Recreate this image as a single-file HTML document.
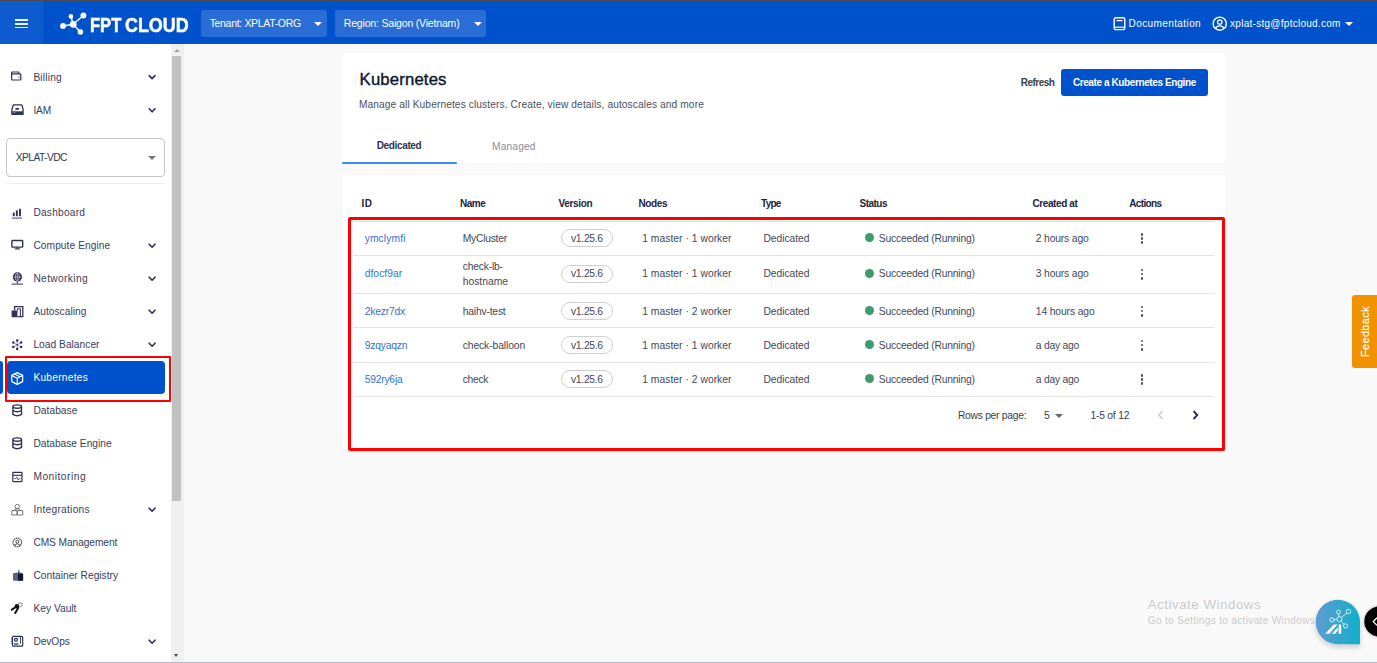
<!DOCTYPE html>
<html><head><meta charset="utf-8">
<style>
*{box-sizing:border-box;margin:0;padding:0}
html,body{width:1377px;height:663px;overflow:hidden;background:#f9f9f9;font-family:"Liberation Sans",sans-serif;position:relative}
.abs{position:absolute}
.tx{position:absolute;white-space:nowrap}
#topline{left:0;top:0;width:1377px;height:1px;background:#4a4d52}
#hdr{left:0;top:1px;width:1377px;height:43px;background:#0052cc}
#hamb{left:0;top:1px;width:43px;height:43px;background:#0e5bd0}
.dd{position:absolute;background:#2b6dd6;border-radius:3px}
.caret{position:absolute;width:0;height:0;border-left:4px solid transparent;border-right:4px solid transparent;border-top:4.2px solid #fff}
#side{left:0;top:44px;width:171px;height:618px;background:#fff}
#sb{left:171px;top:44px;width:13px;height:618px;background:#f0f0f0}
#thumb{left:172px;top:56px;width:9px;height:445px;background:#c1c1c1}
#bottomline{left:0;top:662px;width:1377px;height:1px;background:#b6bac2}
.ic{position:absolute}
.chev{position:absolute;left:148px;width:8px;height:6px}
.card{position:absolute;background:#fff;border-radius:4px}
.rl{position:absolute;left:353px;width:861px;height:1px;background:#e3e3e3}
.chip{position:absolute;left:561px;width:52px;height:18px;border:1px solid #d0d0d0;border-radius:9px}
.dot{position:absolute;left:864.6px;width:9.5px;height:9.3px;border-radius:50%;background:#3d9c6c}
.keb{position:absolute;left:1140.6px;width:3px}
.keb i{display:block;width:2.8px;height:2.8px;border-radius:50%;background:#505050;margin-bottom:1.4px}

</style></head><body>
<div class="abs" id="topline"></div>
<div class="abs" id="hdr"></div>
<div class="abs" id="hamb"></div>
<div class="abs" style="left:171px;top:44px;width:1206px;height:1px;background:#fdfdfd"></div>
<div class="abs" style="left:15px;top:19px;width:13px;height:2px;background:#eef2fb"></div>
<div class="abs" style="left:15px;top:23px;width:13px;height:1.5px;background:#eef2fb"></div>
<div class="abs" style="left:15px;top:26.5px;width:13px;height:1.6px;background:#eef2fb"></div>
<svg class="abs" style="left:56px;top:8px" width="36" height="30" viewBox="0 0 36 30">
 <g stroke="#fff" stroke-width="1.5" fill="none"><line x1="7" y1="17.9" x2="17.2" y2="16.3"/><line x1="17.2" y1="16.3" x2="14.9" y2="8.4"/><line x1="17.2" y1="16.3" x2="27.4" y2="7.5"/><line x1="17.2" y1="16.3" x2="24.4" y2="24"/></g>
 <g fill="#fff"><circle cx="7" cy="17.9" r="2.9"/><circle cx="17.2" cy="16.3" r="3.4"/><circle cx="14.9" cy="8.4" r="2.3"/><circle cx="27.4" cy="7.5" r="2.9"/><circle cx="24.4" cy="24" r="2.8"/></g>
</svg>
<div class="dd" style="left:201px;top:10px;width:125.5px;height:26.7px"></div>
<div class="caret" style="left:314.2px;top:21.8px"></div>
<div class="dd" style="left:335.2px;top:10px;width:150.4px;height:26.7px"></div>
<div class="caret" style="left:473.5px;top:21.8px"></div>
<svg class="abs" style="left:1110px;top:14px" width="20" height="20" viewBox="0 0 20 20">
 <rect x="4.2" y="3.8" width="10.6" height="11.8" rx="1.5" fill="none" stroke="#fff" stroke-width="1.4"/>
 <line x1="6.5" y1="6.6" x2="12.5" y2="6.6" stroke="#fff" stroke-width="1.3"/>
 <line x1="4.2" y1="13.2" x2="14.8" y2="13.2" stroke="#fff" stroke-width="1.2"/>
</svg>
<svg class="abs" style="left:1210px;top:14px" width="20" height="20" viewBox="0 0 20 20">
 <circle cx="9.75" cy="9.7" r="6.6" fill="none" stroke="#fff" stroke-width="1.4"/>
 <circle cx="9.75" cy="8" r="2.2" fill="none" stroke="#fff" stroke-width="1.3"/>
 <path d="M5.6 14.6 Q6.5 11.8 9.75 11.8 Q13 11.8 13.9 14.6" fill="none" stroke="#fff" stroke-width="1.3"/>
</svg>
<div class="caret" style="left:1345px;top:22.2px"></div>

<div class="abs" id="side"></div>
<div class="abs" id="sb"></div>
<div class="abs" id="thumb"></div>
<div class="abs" style="left:173.8px;top:48.6px;width:0;height:0;border-left:3px solid transparent;border-right:3px solid transparent;border-bottom:3.3px solid #a3a3a3"></div>
<div class="abs" style="left:174px;top:653.8px;width:0;height:0;border-left:2.7px solid transparent;border-right:2.7px solid transparent;border-top:3.5px solid #4a4a4a"></div>

<div class="abs" style="left:6px;top:138px;width:158.7px;height:38.5px;border:1px solid #c6c6c6;border-radius:4px"></div>
<div class="caret" style="left:147.7px;top:156px;border-top-color:#757575"></div>
<div class="abs" style="left:6px;top:183px;width:159px;height:1px;background:#eef0f4"></div>
<div class="abs" style="left:0;top:361px;width:2.7px;height:33px;background:#0052cc;border-radius:0 3px 3px 0"></div>
<div class="abs" style="left:6.5px;top:361px;width:158.5px;height:33px;background:#0052cc;border-radius:4px"></div>

<svg class="abs" style="left:0;top:0" width="172" height="663" viewBox="0 0 172 663">
 <g fill="none" stroke="#2b3157" stroke-width="1.6" stroke-linecap="round" stroke-linejoin="round">
  <path d="M149.2 75.6 L152.1 78.6 L155 75.6"/>
  <path d="M149.2 108.8 L152.1 111.8 L155 108.8"/>
  <path d="M149.2 244.2 L152.1 247.2 L155 244.2"/>
  <path d="M149.2 277.2 L152.1 280.2 L155 277.2"/>
  <path d="M149.2 310.2 L152.1 313.2 L155 310.2"/>
  <path d="M149.2 343.2 L152.1 346.2 L155 343.2"/>
  <path d="M149.2 508.2 L152.1 511.2 L155 508.2"/>
  <path d="M149.2 640.2 L152.1 643.2 L155 640.2"/>
 </g>
 <g fill="none" stroke="#2b3157" stroke-width="1.2" stroke-linejoin="round">
  <!-- billing -->
  <rect x="11.6" y="73.8" width="9.2" height="6.2" rx="0.8"/>
  <path d="M11.6 75.2 V72.6 Q11.6 72 12.2 72 H18.8 V73.8"/>
  <!-- IAM -->
  <path d="M11.9 114.3 V109.4 L13.5 104.8 H21.9 L23.1 109.4 V114.3 Z" stroke-width="1.3"/>
  <rect x="12.2" y="111.3" width="10.6" height="2.8" fill="#2b3157" stroke="none"/>
  <line x1="13.6" y1="112.7" x2="15.2" y2="112.7" stroke="#fff" stroke-width="0.6"/>
  <!-- compute -->
  <rect x="11.9" y="240.5" width="10.8" height="6.6" rx="0.6" stroke-width="1.4"/>
  <line x1="17.3" y1="247.2" x2="17.3" y2="248.8"/>
  <line x1="14.6" y1="248.9" x2="20" y2="248.9" stroke-width="1.1"/>
  <!-- monitoring -->
  <rect x="12.8" y="472.4" width="9.2" height="9.2" rx="0.6" stroke-width="1.2"/>
  <line x1="12.8" y1="475.3" x2="22" y2="475.3" stroke-width="1.1"/>
  <path d="M14.3 478.6 H15.8 L16.8 477.2 L18.2 480 L19.2 478.6 H20.6" stroke-width="0.8"/>
  <!-- DB -->
  <ellipse cx="17.2" cy="406.6" rx="4.3" ry="1.7" stroke-width="1.4"/>
  <path d="M12.9 406.6 V414.4 Q17.2 417 21.5 414.4 V406.6 M12.9 410.5 Q17.2 413 21.5 410.5" stroke-width="1.4"/>
  <ellipse cx="17.2" cy="439.6" rx="4.3" ry="1.7" stroke-width="1.4"/>
  <path d="M12.9 439.6 V447.4 Q17.2 450 21.5 447.4 V439.6 M12.9 443.5 Q17.2 446 21.5 443.5" stroke-width="1.4"/>
  <!-- integrations -->
  <circle cx="17.2" cy="506.6" r="2.2" stroke="#66666e" stroke-width="0.9"/>
  <rect x="11.8" y="510.6" width="5.2" height="4.4" stroke="#66666e" stroke-width="0.9"/>
  <rect x="17.4" y="510.6" width="5.4" height="4.4" stroke="#66666e" stroke-width="0.9"/>
  <path d="M14.2 510.6 Q14.5 508.6 17.2 508.6 Q19.9 508.6 20.2 510.6" stroke="#66666e" stroke-width="0.9"/>
  <!-- CMS -->
  <circle cx="17.3" cy="542.4" r="4.3" stroke="#4a4a52" stroke-width="1.2" stroke-dasharray="1.4 0.6"/>
  <circle cx="17.3" cy="541.6" r="1.5" stroke="#4a4a52" stroke-width="1"/>
  <path d="M14.6 546 Q15 543.8 17.3 543.8 Q19.6 543.8 20 546" stroke="#4a4a52" stroke-width="1"/>
  <!-- devops -->
  <rect x="12.5" y="636.3" width="10.2" height="9.9" rx="1" stroke-width="1.2"/>
  <circle cx="16" cy="639.8" r="1.5" stroke-width="1.2"/>
  <line x1="20.5" y1="637" x2="20.5" y2="643.6" stroke-width="0.9"/>
  <line x1="14" y1="644" x2="18.3" y2="644" stroke-width="1.3"/>
  <line x1="11.6" y1="637.6" x2="11.6" y2="644.6" stroke-width="0.8" stroke-dasharray="1 0.8"/>
 </g>
 <g fill="#2b3157">
  <circle cx="19" cy="77.1" r="0.7"/>
  <path d="M15.1 109.8 A2.1 2.1 0 0 1 19.3 109.8 Z"/>
  <!-- dashboard -->
  <rect x="12.8" y="212.6" width="1.9" height="3.6"/>
  <rect x="15.9" y="210.4" width="1.9" height="5.8"/>
  <rect x="19" y="208.8" width="1.9" height="7.4"/>
  <rect x="12" y="217.6" width="10" height="0.9"/>
  <!-- networking -->
  <circle cx="17.4" cy="276.9" r="4.6"/>
  <rect x="16.8" y="280.5" width="1" height="3.2"/>
  <rect x="11.6" y="283.6" width="11.4" height="1"/>
  <!-- autoscaling -->
  <rect x="11.6" y="310.6" width="5.8" height="6.6" rx="0.6"/>
  <!-- load balancer -->
  <circle cx="17.2" cy="340.5" r="1.25"/><circle cx="13.3" cy="342.5" r="1.25"/><circle cx="21.1" cy="342.5" r="1.25"/>
  <circle cx="13.3" cy="347" r="1.25"/><circle cx="21.1" cy="347" r="1.25"/><circle cx="17.2" cy="349" r="1.25"/><circle cx="17.2" cy="344.8" r="1"/>
  <!-- container -->
  <path d="M13 573.4 Q15.5 572.6 18 572.6 L18.4 569.8 H19.2 L19.6 572.6 Q21.6 572.8 23.1 573.4 V580.4 Q18 581 13 580.4 Z" fill="#5a5f86"/><path d="M18 573.6 Q20.6 573.2 23.1 574.2 V580.4 Q20.6 580.8 18 580.8 Z" fill="#12163d"/>
  <!-- key -->
  <circle cx="17" cy="606.2" r="2.3" fill="#111"/><path d="M16 607 L11.8 609.6 M18 608.2 L15.2 613" stroke="#111" stroke-width="2" stroke-linecap="round" fill="none"/><path d="M17.8 604.2 Q20.6 601.8 22.2 603.4 Q22.6 605.6 19.8 607.8" stroke="#777" stroke-width="0.9" fill="none"/>
 </g>
 <g fill="none" stroke="#fff" stroke-width="0.7">
  <line x1="13.5" y1="277" x2="21.1" y2="277" stroke-width="0.5"/><line x1="17.3" y1="273.2" x2="17.3" y2="280.8" stroke-width="0.5"/>
  <ellipse cx="17.3" cy="277" rx="2" ry="3.8" stroke-width="0.5"/>
 </g>
 <g fill="none" stroke="#2b3157" stroke-width="1.3">
  <path d="M14.6 310.6 V306.6 H22.8 V316.6 H17.4"/>
  <path d="M17.4 310.6 V308.8 H20.4 V316.6" stroke-width="1"/>
  <path d="M17.2 341.6 V343.6 M14.3 343.2 L16.1 344.2 M20.1 343.2 L18.3 344.2 M14.3 346.4 L16.1 345.4 M20.1 346.4 L18.3 345.4 M17.2 346 V348" stroke-width="0.5"/>
 </g>
 <!-- kubernetes cube white -->
 <g fill="none" stroke="#fff" stroke-width="1.3" stroke-linejoin="round">
  <path d="M17.2 372.6 L22.6 375.4 V381.6 L17.2 384.4 L11.8 381.6 V375.4 Z"/>
  <path d="M11.8 375.4 L17.2 378.2 L22.6 375.4 M17.2 378.2 V384.4 M14.4 374 L20 376.8" stroke-width="1.1"/>
 </g>
</svg>

<div class="card" style="left:341.5px;top:52.5px;width:884px;height:110.5px;box-shadow:0 0 1px rgba(0,0,0,0.06)"></div>
<div class="abs" style="left:1061.3px;top:69.4px;width:147.2px;height:26.4px;background:#0052cc;border-radius:3px"></div>
<div class="abs" style="left:342px;top:161.9px;width:114.5px;height:1.8px;background:#3f88f2;border-radius:1px"></div>

<div class="card" style="left:341.5px;top:175px;width:884px;height:276px;box-shadow:0 0 1px rgba(0,0,0,0.08),0 1px 2px rgba(0,0,0,0.06)"></div>
<div class="rl" style="top:221px"></div>
<div class="rl" style="top:255px"></div>
<div class="rl" style="top:293px"></div>
<div class="rl" style="top:327px"></div>
<div class="rl" style="top:362px"></div>
<div class="rl" style="top:396px"></div>
<div class="chip" style="top:229px"></div>
<div class="chip" style="top:264.5px"></div>
<div class="chip" style="top:301.5px"></div>
<div class="chip" style="top:335.5px"></div>
<div class="chip" style="top:370px"></div>
<div class="dot" style="top:233.2px"></div>
<div class="dot" style="top:268.5px"></div>
<div class="dot" style="top:305.7px"></div>
<div class="dot" style="top:339.8px"></div>
<div class="dot" style="top:374px"></div>
<div class="keb" style="top:233px"><i></i><i></i><i></i></div>
<div class="keb" style="top:268.5px"><i></i><i></i><i></i></div>
<div class="keb" style="top:305.5px"><i></i><i></i><i></i></div>
<div class="keb" style="top:339.5px"><i></i><i></i><i></i></div>
<div class="keb" style="top:374px"><i></i><i></i><i></i></div>
<div class="caret" style="left:1054.8px;top:413.5px;border-top-color:#666"></div>
<svg class="abs" style="left:1150px;top:405px" width="55" height="20" viewBox="0 0 55 20">
 <path d="M12.4 6.2 L9 10.1 L12.4 14" fill="none" stroke="#c4c6cc" stroke-width="1.3"/>
 <path d="M43.6 6.2 L47.2 10.1 L43.6 14" fill="none" stroke="#22284a" stroke-width="1.9"/>
</svg>

<div class="abs" style="left:348.3px;top:217.2px;width:877px;height:234.3px;border:3px solid #f00;border-radius:2px"></div>
<div class="abs" style="left:5px;top:355.5px;width:166px;height:46.5px;border:2px solid #f00;border-radius:1px"></div>

<div class="abs" style="left:1352.3px;top:295px;width:25px;height:72.5px;background:#f39200;border-radius:3px 0 0 3px"></div>
<div class="tx" style="left:1359.9px;top:357px;font-size:11px;line-height:11px;color:#fff;transform:rotate(-90deg);transform-origin:0 0;letter-spacing:0.32px;-webkit-text-stroke:0.15px #fff">Feedback</div>

<div class="tx" id="t0" style="left:89.80px;top:14.88px;font-size:20.70px;line-height:20.70px;color:#fff;font-weight:bold;transform:scaleX(0.8008);transform-origin:0 0;-webkit-text-stroke:0.5px #fff;">FPT</div>
<div class="tx" id="t1" style="left:209.70px;top:17.81px;font-size:10.50px;line-height:10.50px;color:#fff;font-weight:normal;letter-spacing:-0.331px;">Tenant: XPLAT-ORG</div>
<div class="tx" id="t2" style="left:343.80px;top:17.81px;font-size:10.50px;line-height:10.50px;color:#fff;font-weight:normal;letter-spacing:-0.183px;">Region: Saigon (Vietnam)</div>
<div class="tx" id="t3" style="left:1128.60px;top:18.73px;font-size:10.00px;line-height:10.00px;color:#fff;font-weight:normal;letter-spacing:0.400px;">Documentation</div>
<div class="tx" id="t4" style="left:1230.10px;top:18.64px;font-size:10.00px;line-height:10.00px;color:#fff;font-weight:normal;letter-spacing:0.271px;">xplat-stg@fptcloud.com</div>
<div class="tx" id="t5" style="left:125.10px;top:14.88px;font-size:20.70px;line-height:20.70px;color:#fff;font-weight:bold;transform:scaleX(0.8652);transform-origin:0 0;-webkit-text-stroke:0.5px #fff;">CLOUD</div>
<div class="tx" id="t6" style="left:33.40px;top:72.67px;font-size:10.20px;line-height:10.20px;color:#39405c;font-weight:normal;letter-spacing:0.183px;">Billing</div>
<div class="tx" id="t7" style="left:33.40px;top:105.67px;font-size:10.20px;line-height:10.20px;color:#39405c;font-weight:normal;letter-spacing:-0.150px;">IAM</div>
<div class="tx" id="t8" style="left:33.40px;top:207.67px;font-size:10.20px;line-height:10.20px;color:#39405c;font-weight:normal;letter-spacing:0.212px;">Dashboard</div>
<div class="tx" id="t9" style="left:33.40px;top:240.67px;font-size:10.20px;line-height:10.20px;color:#39405c;font-weight:normal;letter-spacing:0.077px;">Compute Engine</div>
<div class="tx" id="t10" style="left:33.40px;top:273.67px;font-size:10.20px;line-height:10.20px;color:#39405c;font-weight:normal;letter-spacing:0.367px;">Networking</div>
<div class="tx" id="t11" style="left:33.40px;top:306.67px;font-size:10.20px;line-height:10.20px;color:#39405c;font-weight:normal;letter-spacing:0.030px;">Autoscaling</div>
<div class="tx" id="t12" style="left:33.40px;top:339.67px;font-size:10.20px;line-height:10.20px;color:#39405c;font-weight:normal;letter-spacing:0.033px;">Load Balancer</div>
<div class="tx" id="t13" style="left:33.40px;top:372.67px;font-size:10.20px;line-height:10.20px;color:#fff;font-weight:normal;letter-spacing:0.256px;">Kubernetes</div>
<div class="tx" id="t14" style="left:33.40px;top:405.67px;font-size:10.20px;line-height:10.20px;color:#39405c;font-weight:normal;letter-spacing:0.057px;">Database</div>
<div class="tx" id="t15" style="left:33.40px;top:438.67px;font-size:10.20px;line-height:10.20px;color:#39405c;font-weight:normal;letter-spacing:0.000px;">Database Engine</div>
<div class="tx" id="t16" style="left:33.40px;top:471.67px;font-size:10.20px;line-height:10.20px;color:#39405c;font-weight:normal;letter-spacing:0.511px;">Monitoring</div>
<div class="tx" id="t17" style="left:33.40px;top:504.67px;font-size:10.20px;line-height:10.20px;color:#39405c;font-weight:normal;letter-spacing:0.273px;">Integrations</div>
<div class="tx" id="t18" style="left:33.40px;top:537.67px;font-size:10.20px;line-height:10.20px;color:#39405c;font-weight:normal;letter-spacing:-0.077px;">CMS Management</div>
<div class="tx" id="t19" style="left:33.40px;top:570.67px;font-size:10.20px;line-height:10.20px;color:#39405c;font-weight:normal;letter-spacing:0.018px;">Container Registry</div>
<div class="tx" id="t20" style="left:33.40px;top:603.67px;font-size:10.20px;line-height:10.20px;color:#39405c;font-weight:normal;letter-spacing:0.025px;">Key Vault</div>
<div class="tx" id="t21" style="left:33.40px;top:636.67px;font-size:10.20px;line-height:10.20px;color:#39405c;font-weight:normal;letter-spacing:-0.060px;">DevOps</div>
<div class="tx" id="t22" style="left:15.70px;top:152.78px;font-size:10.30px;line-height:10.30px;color:#343a4a;font-weight:normal;letter-spacing:-0.575px;">XPLAT-VDC</div>
<div class="tx" id="t23" style="left:359.60px;top:72.16px;font-size:16.70px;line-height:16.70px;color:#0d1633;font-weight:normal;letter-spacing:0.167px;-webkit-text-stroke:0.4px #0d1633;">Kubernetes</div>
<div class="tx" id="t24" style="left:358.90px;top:100.07px;font-size:10.20px;line-height:10.20px;color:#4b5060;font-weight:normal;letter-spacing:0.103px;">Manage all Kubernetes clusters. Create, view details, autoscales and more</div>
<div class="tx" id="t25" style="left:1020.80px;top:77.53px;font-size:10.00px;line-height:10.00px;color:#3a3f4e;font-weight:bold;letter-spacing:-0.517px;">Refresh</div>
<div class="tx" id="t26" style="left:1072.90px;top:77.53px;font-size:10.00px;line-height:10.00px;color:#fff;font-weight:bold;letter-spacing:-0.400px;">Create a Kubernetes Engine</div>
<div class="tx" id="t27" style="left:376.70px;top:140.94px;font-size:10.00px;line-height:10.00px;color:#2e3452;font-weight:bold;letter-spacing:-0.350px;">Dedicated</div>
<div class="tx" id="t28" style="left:492.00px;top:141.97px;font-size:10.20px;line-height:10.20px;color:#8c909c;font-weight:normal;letter-spacing:0.167px;">Managed</div>
<div class="tx" id="t29" style="left:361.40px;top:198.63px;font-size:10.00px;line-height:10.00px;color:#1e2440;font-weight:bold;letter-spacing:0.600px;">ID</div>
<div class="tx" id="t30" style="left:460.00px;top:198.63px;font-size:10.00px;line-height:10.00px;color:#1e2440;font-weight:bold;letter-spacing:-0.467px;">Name</div>
<div class="tx" id="t31" style="left:558.40px;top:198.63px;font-size:10.00px;line-height:10.00px;color:#1e2440;font-weight:bold;letter-spacing:-0.300px;">Version</div>
<div class="tx" id="t32" style="left:638.40px;top:198.63px;font-size:10.00px;line-height:10.00px;color:#1e2440;font-weight:bold;letter-spacing:-0.325px;">Nodes</div>
<div class="tx" id="t33" style="left:761.10px;top:198.63px;font-size:10.00px;line-height:10.00px;color:#1e2440;font-weight:bold;letter-spacing:-0.767px;">Type</div>
<div class="tx" id="t34" style="left:859.60px;top:198.63px;font-size:10.00px;line-height:10.00px;color:#1e2440;font-weight:bold;letter-spacing:-0.540px;">Status</div>
<div class="tx" id="t35" style="left:1032.50px;top:198.63px;font-size:10.00px;line-height:10.00px;color:#1e2440;font-weight:bold;letter-spacing:-0.411px;">Created at</div>
<div class="tx" id="t36" style="left:1129.20px;top:198.63px;font-size:10.00px;line-height:10.00px;color:#1e2440;font-weight:bold;letter-spacing:-0.633px;">Actions</div>
<div class="tx" id="t37" style="left:364.70px;top:234.08px;font-size:10.30px;line-height:10.30px;color:#3270d2;font-weight:normal;letter-spacing:0.100px;">ymclymfi</div>
<div class="tx" id="t38" style="left:462.70px;top:234.08px;font-size:10.30px;line-height:10.30px;color:#43475a;font-weight:normal;letter-spacing:-0.238px;">MyCluster</div>
<div class="tx" id="t39" style="left:571.00px;top:234.08px;font-size:10.30px;line-height:10.30px;color:#43475a;font-weight:normal;letter-spacing:-0.283px;">v1.25.6</div>
<div class="tx" id="t40" style="left:642.20px;top:234.08px;font-size:10.30px;line-height:10.30px;color:#43475a;font-weight:normal;letter-spacing:0.033px;">1 master · 1 worker</div>
<div class="tx" id="t41" style="left:763.50px;top:234.08px;font-size:10.30px;line-height:10.30px;color:#43475a;font-weight:normal;letter-spacing:-0.062px;">Dedicated</div>
<div class="tx" id="t42" style="left:878.80px;top:234.08px;font-size:10.30px;line-height:10.30px;color:#43475a;font-weight:normal;letter-spacing:-0.194px;">Succeeded (Running)</div>
<div class="tx" id="t43" style="left:1035.80px;top:234.08px;font-size:10.30px;line-height:10.30px;color:#43475a;font-weight:normal;letter-spacing:-0.150px;">2 hours ago</div>
<div class="tx" id="t44" style="left:364.70px;top:269.48px;font-size:10.30px;line-height:10.30px;color:#3270d2;font-weight:normal;letter-spacing:0.043px;">dfocf9ar</div>
<div class="tx" id="t45" style="left:462.70px;top:262.28px;font-size:10.30px;line-height:10.30px;color:#43475a;font-weight:normal;letter-spacing:-0.188px;">check-lb-</div>
<div class="tx" id="t46" style="left:462.70px;top:277.18px;font-size:10.30px;line-height:10.30px;color:#43475a;font-weight:normal;letter-spacing:0.014px;">hostname</div>
<div class="tx" id="t47" style="left:571.00px;top:269.48px;font-size:10.30px;line-height:10.30px;color:#43475a;font-weight:normal;letter-spacing:-0.283px;">v1.25.6</div>
<div class="tx" id="t48" style="left:642.20px;top:269.48px;font-size:10.30px;line-height:10.30px;color:#43475a;font-weight:normal;letter-spacing:0.033px;">1 master · 1 worker</div>
<div class="tx" id="t49" style="left:763.50px;top:269.48px;font-size:10.30px;line-height:10.30px;color:#43475a;font-weight:normal;letter-spacing:-0.062px;">Dedicated</div>
<div class="tx" id="t50" style="left:878.80px;top:269.48px;font-size:10.30px;line-height:10.30px;color:#43475a;font-weight:normal;letter-spacing:-0.194px;">Succeeded (Running)</div>
<div class="tx" id="t51" style="left:1035.80px;top:269.48px;font-size:10.30px;line-height:10.30px;color:#43475a;font-weight:normal;letter-spacing:-0.150px;">3 hours ago</div>
<div class="tx" id="t52" style="left:364.70px;top:306.68px;font-size:10.30px;line-height:10.30px;color:#3270d2;font-weight:normal;letter-spacing:-0.186px;">2kezr7dx</div>
<div class="tx" id="t53" style="left:462.70px;top:306.68px;font-size:10.30px;line-height:10.30px;color:#43475a;font-weight:normal;letter-spacing:-0.178px;">haihv-test</div>
<div class="tx" id="t54" style="left:571.00px;top:306.68px;font-size:10.30px;line-height:10.30px;color:#43475a;font-weight:normal;letter-spacing:-0.283px;">v1.25.6</div>
<div class="tx" id="t55" style="left:642.20px;top:306.68px;font-size:10.30px;line-height:10.30px;color:#43475a;font-weight:normal;letter-spacing:0.033px;">1 master · 2 worker</div>
<div class="tx" id="t56" style="left:763.50px;top:306.68px;font-size:10.30px;line-height:10.30px;color:#43475a;font-weight:normal;letter-spacing:-0.062px;">Dedicated</div>
<div class="tx" id="t57" style="left:878.80px;top:306.68px;font-size:10.30px;line-height:10.30px;color:#43475a;font-weight:normal;letter-spacing:-0.194px;">Succeeded (Running)</div>
<div class="tx" id="t58" style="left:1035.80px;top:306.68px;font-size:10.30px;line-height:10.30px;color:#43475a;font-weight:normal;letter-spacing:-0.118px;">14 hours ago</div>
<div class="tx" id="t59" style="left:364.70px;top:340.78px;font-size:10.30px;line-height:10.30px;color:#3270d2;font-weight:normal;letter-spacing:-0.186px;">9zqyaqzn</div>
<div class="tx" id="t60" style="left:462.70px;top:340.78px;font-size:10.30px;line-height:10.30px;color:#43475a;font-weight:normal;letter-spacing:-0.083px;">check-balloon</div>
<div class="tx" id="t61" style="left:571.00px;top:340.78px;font-size:10.30px;line-height:10.30px;color:#43475a;font-weight:normal;letter-spacing:-0.283px;">v1.25.6</div>
<div class="tx" id="t62" style="left:642.20px;top:340.78px;font-size:10.30px;line-height:10.30px;color:#43475a;font-weight:normal;letter-spacing:0.033px;">1 master · 1 worker</div>
<div class="tx" id="t63" style="left:763.50px;top:340.78px;font-size:10.30px;line-height:10.30px;color:#43475a;font-weight:normal;letter-spacing:-0.062px;">Dedicated</div>
<div class="tx" id="t64" style="left:878.80px;top:340.78px;font-size:10.30px;line-height:10.30px;color:#43475a;font-weight:normal;letter-spacing:-0.194px;">Succeeded (Running)</div>
<div class="tx" id="t65" style="left:1035.80px;top:340.78px;font-size:10.30px;line-height:10.30px;color:#43475a;font-weight:normal;letter-spacing:-0.238px;">a day ago</div>
<div class="tx" id="t66" style="left:364.70px;top:375.08px;font-size:10.30px;line-height:10.30px;color:#3270d2;font-weight:normal;letter-spacing:-0.214px;">592ry6ja</div>
<div class="tx" id="t67" style="left:462.70px;top:375.08px;font-size:10.30px;line-height:10.30px;color:#43475a;font-weight:normal;letter-spacing:-0.275px;">check</div>
<div class="tx" id="t68" style="left:571.00px;top:375.08px;font-size:10.30px;line-height:10.30px;color:#43475a;font-weight:normal;letter-spacing:-0.283px;">v1.25.6</div>
<div class="tx" id="t69" style="left:642.20px;top:375.08px;font-size:10.30px;line-height:10.30px;color:#43475a;font-weight:normal;letter-spacing:0.033px;">1 master · 2 worker</div>
<div class="tx" id="t70" style="left:763.50px;top:375.08px;font-size:10.30px;line-height:10.30px;color:#43475a;font-weight:normal;letter-spacing:-0.062px;">Dedicated</div>
<div class="tx" id="t71" style="left:878.80px;top:375.08px;font-size:10.30px;line-height:10.30px;color:#43475a;font-weight:normal;letter-spacing:-0.194px;">Succeeded (Running)</div>
<div class="tx" id="t72" style="left:1035.80px;top:375.08px;font-size:10.30px;line-height:10.30px;color:#43475a;font-weight:normal;letter-spacing:-0.238px;">a day ago</div>
<div class="tx" id="t73" style="left:957.90px;top:411.28px;font-size:10.30px;line-height:10.30px;color:#3c404c;font-weight:normal;letter-spacing:-0.269px;">Rows per page:</div>
<div class="tx" id="t74" style="left:1044.00px;top:411.28px;font-size:10.30px;line-height:10.30px;color:#3c404c;font-weight:normal;letter-spacing:0.000px;">5</div>
<div class="tx" id="t75" style="left:1090.40px;top:411.28px;font-size:10.30px;line-height:10.30px;color:#3c404c;font-weight:normal;letter-spacing:-0.200px;">1-5 of 12</div>
<div class="tx" id="t76" style="left:1147.70px;top:597.74px;font-size:13.30px;line-height:13.30px;color:rgba(160,160,160,0.55);font-weight:normal;letter-spacing:0.533px;">Activate Windows</div>
<div class="tx" id="t77" style="left:1147.70px;top:615.87px;font-size:10.20px;line-height:10.20px;color:rgba(160,160,160,0.55);font-weight:normal;letter-spacing:0.273px;">Go to Settings to activate Windows</div>

<svg class="abs" style="left:1310px;top:594px" width="67" height="60" viewBox="0 0 67 60">
 <defs>
  <linearGradient id="ag" x1="0" y1="0" x2="1" y2="0"><stop offset="0" stop-color="#5f9bd2"/><stop offset="1" stop-color="#12aec8"/></linearGradient>
  <filter id="sh" x="-30%" y="-30%" width="160%" height="170%"><feDropShadow dx="0" dy="3" stdDeviation="2.5" flood-color="#000" flood-opacity="0.18"/></filter>
 </defs>
 <path d="M5.6 28 A22.2 22.2 0 0 1 50 28 V50.2 H27.8 A22.2 22.2 0 0 1 5.6 28 Z" fill="url(#ag)" filter="url(#sh)"/>
 <g stroke="#e8f6fa" stroke-width="0.9" fill="none">
  <circle cx="28.5" cy="18.1" r="1.9"/><circle cx="38.5" cy="17.5" r="2.2"/><circle cx="22" cy="25.9" r="2.1"/><circle cx="29.4" cy="25.2" r="2.5"/><circle cx="35.5" cy="31.9" r="2.1"/>
  <line x1="28.9" y1="22.7" x2="28.7" y2="20"/><line x1="31.3" y1="23.6" x2="36.8" y2="19"/><line x1="24.1" y1="25.7" x2="26.9" y2="25.4"/><line x1="30.9" y1="27.2" x2="34.2" y2="30.3"/>
 </g>
 <path d="M15.2 39.7 H19.3 L27.6 30.6 H23.8 Z M21.8 39.7 H25.3 L27.8 36.6 V33.2 Z M28.7 30.6 H31.2 V39.7 H28.7 Z" fill="#fff"/>
</svg>
<svg class="abs" style="left:1358px;top:600px" width="19" height="44" viewBox="0 0 19 44">
 <circle cx="21.5" cy="21.6" r="16" fill="#000" stroke="#e4e4e4" stroke-width="1.6"/>
 <path d="M19 17.7 L15.3 21.6 L19 25.4" fill="none" stroke="#fff" stroke-width="1.3"/>
</svg>
<div class="abs" id="bottomline"></div>

</body></html>
